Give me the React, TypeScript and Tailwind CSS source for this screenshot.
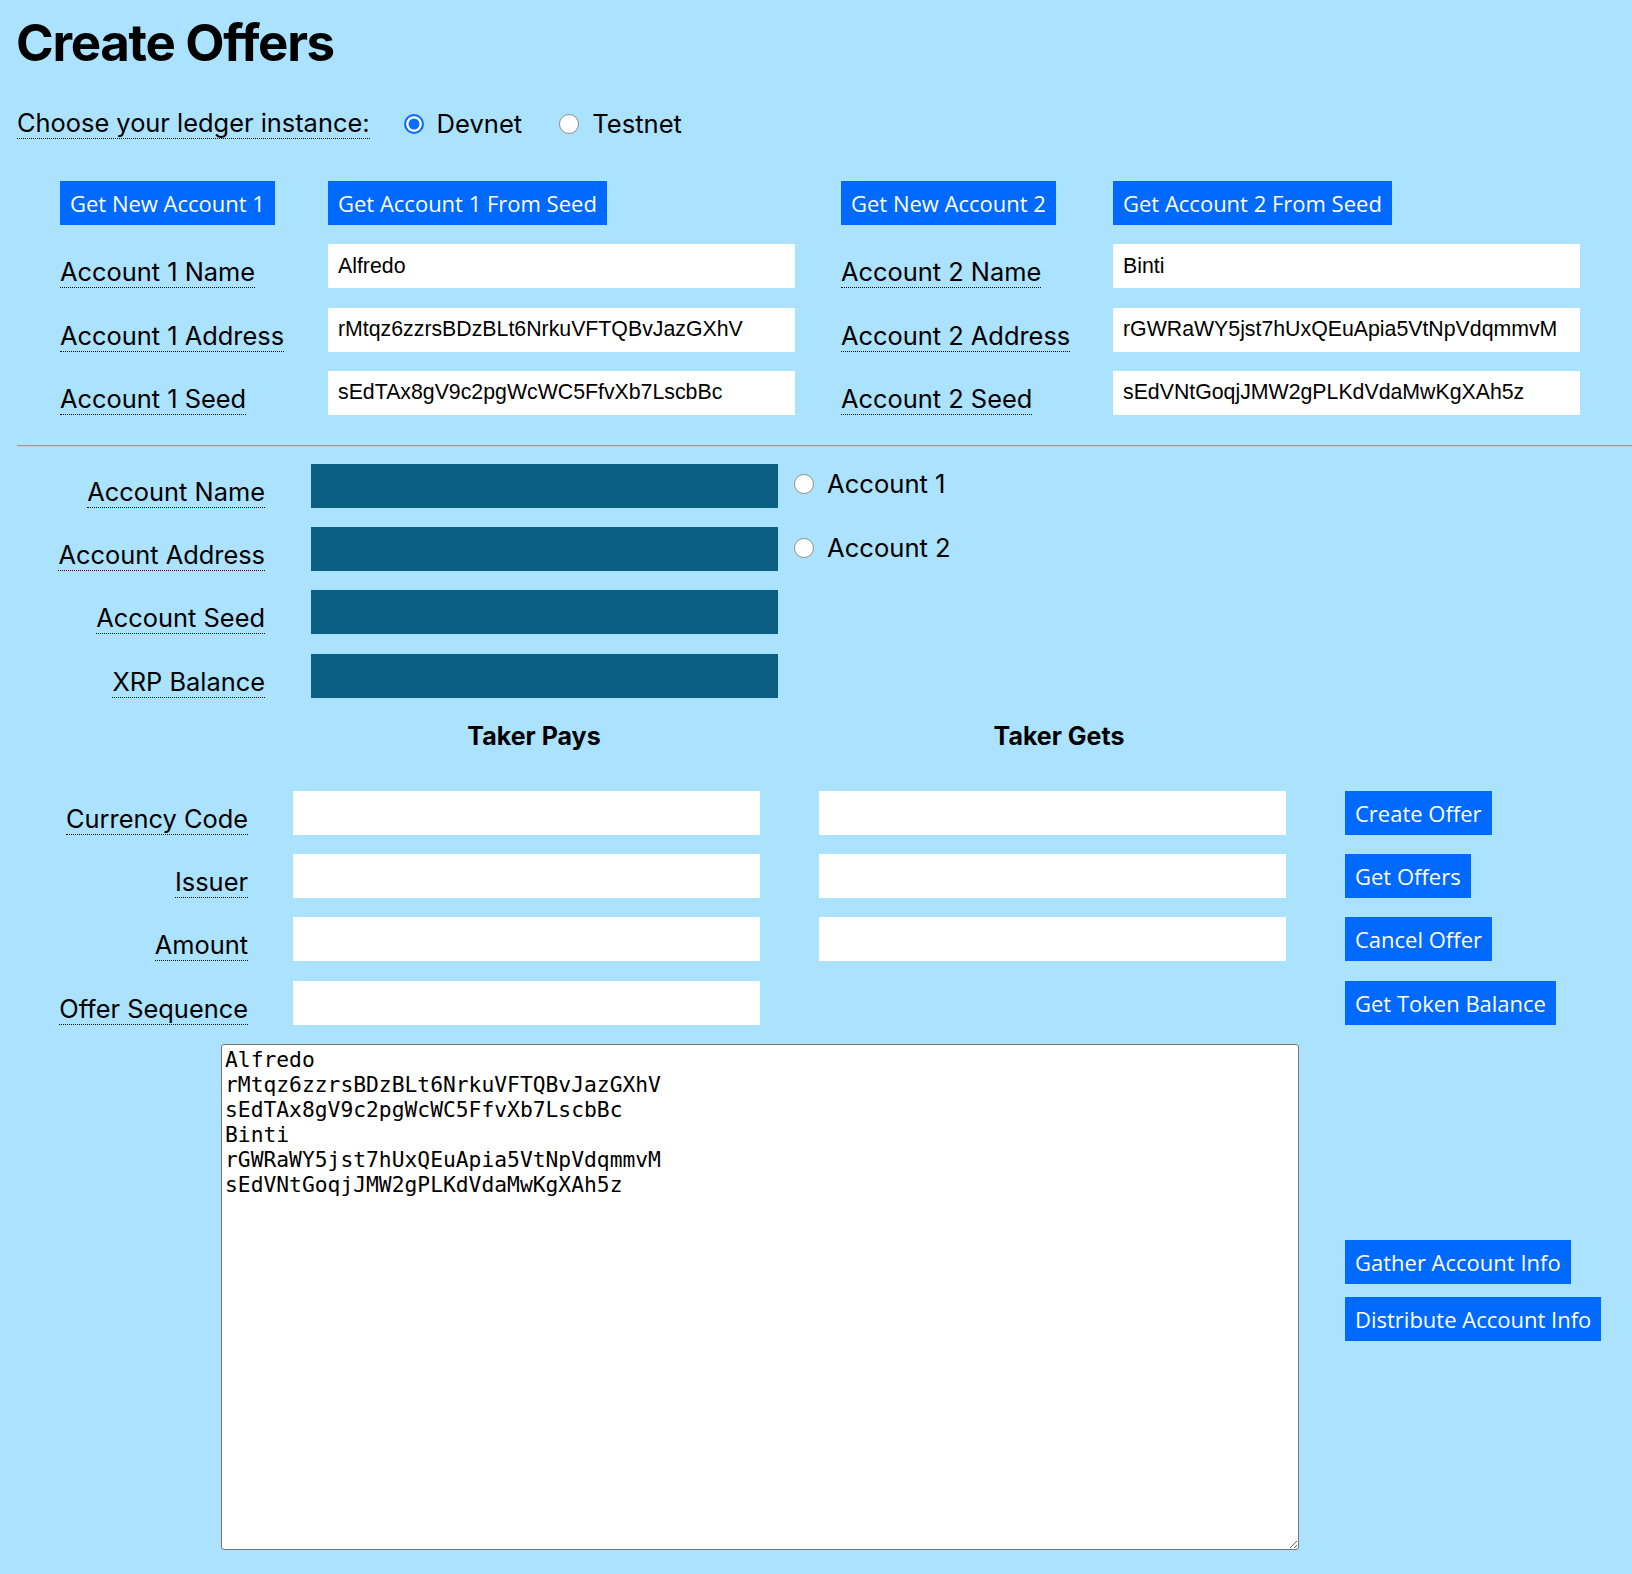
import React from 'react';

const labelCls =
    "font-['Inter',sans-serif] text-[25.4px] leading-[30px] text-black whitespace-nowrap border-b border-dotted border-black";
const btnCls =
    "h-[44px] px-[10px] bg-[#0069ff] text-white font-['Open_Sans',sans-serif] font-medium text-[22px] leading-none whitespace-nowrap";
const inputCls =
    "h-[44px] w-[467px] bg-white px-[10px] font-['Liberation_Sans',Arial,sans-serif] text-[21.3px] text-black outline-none";
const darkInputCls = 'h-[44px] w-[467px] bg-[#0b5f82] px-[10px] outline-none';
const radioCls =
    'appearance-none w-[20px] h-[20px] rounded-full border border-[#8e8e8e] bg-white shrink-0 checked:border-2 checked:border-[#0b6cff] checked:bg-[#0b6cff] checked:shadow-[inset_0_0_0_2.5px_#fff]';

const log = [
    'Alfredo',
    'rMtqz6zzrsBDzBLt6NrkuVFTQBvJazGXhV',
    'sEdTAx8gV9c2pgWcWC5FfvXb7LscbBc',
    'Binti',
    'rGWRaWY5jst7hUxQEuApia5VtNpVdqmmvM',
    'sEdVNtGoqjJMW2gPLKdVdaMwKgXAh5z',
].join('\n');

function Label({ children, className = '' }: { children: React.ReactNode; className?: string }) {
    return <span className={`${labelCls} ${className}`}>{children}</span>;
}

export default function App() {
    return (
        <div className="min-h-screen bg-[#abe2fe] pl-[17px] pb-[23px] font-['Inter',sans-serif] text-black">
            {/* Title */}
            <h1 className="pt-[15px] font-['Inter',sans-serif] text-[51px] leading-[56px] font-bold tracking-[-1.3px] -ml-[1px]">
                Create Offers
            </h1>

            {/* Ledger choice */}
            <div className="mt-[37px] flex items-center h-[31px]">
                <Label>Choose your ledger instance:</Label>
                <label className="ml-[34px] flex items-center gap-[13px] text-[25.6px] leading-[30px]">
                    <input type="radio" name="ledger" defaultChecked className={radioCls} />
                    Devnet
                </label>
                <label className="ml-[37px] flex items-center gap-[13px] text-[25.6px] leading-[30px]">
                    <input type="radio" name="ledger" className={radioCls} />
                    Testnet
                </label>
            </div>

            {/* Account 1 / Account 2 */}
            <div className="mt-[42px] ml-[43px] grid grid-cols-[268px_513px_272px_auto] auto-rows-[44px] gap-y-[19.3px]">
                <button className={`${btnCls} justify-self-start`}>Get New Account 1</button>
                <button className={`${btnCls} justify-self-start`}>Get Account 1 From Seed</button>
                <button className={`${btnCls} justify-self-start`}>Get New Account 2</button>
                <button className={`${btnCls} justify-self-start`}>Get Account 2 From Seed</button>

                <Label className="self-end justify-self-start">Account 1 Name</Label>
                <input className={inputCls} defaultValue="Alfredo" />
                <Label className="self-end justify-self-start">Account 2 Name</Label>
                <input className={inputCls} defaultValue="Binti" />

                <Label className="self-end justify-self-start">Account 1 Address</Label>
                <input className={inputCls} defaultValue="rMtqz6zzrsBDzBLt6NrkuVFTQBvJazGXhV" />
                <Label className="self-end justify-self-start">Account 2 Address</Label>
                <input className={inputCls} defaultValue="rGWRaWY5jst7hUxQEuApia5VtNpVdqmmvM" />

                <Label className="self-end justify-self-start">Account 1 Seed</Label>
                <input className={inputCls} defaultValue="sEdTAx8gV9c2pgWcWC5FfvXb7LscbBc" />
                <Label className="self-end justify-self-start">Account 2 Seed</Label>
                <input className={inputCls} defaultValue="sEdVNtGoqjJMW2gPLKdVdaMwKgXAh5z" />
            </div>

            <hr className="mt-[30px] h-0 border-0 border-t border-b border-t-[#9b9b9b] border-b-[#c9c9c9]" />

            {/* Selected account */}
            <div className="mt-[17px] ml-[43px] grid grid-cols-[251px_483px_auto] auto-rows-[44px] gap-y-[19.3px]">
                <div className="pr-[46px] flex justify-end items-end">
                    <Label>Account Name</Label>
                </div>
                <input className={darkInputCls} />
                <label className="self-start mt-[5px] h-[30px] flex items-center gap-[13px] text-[25.6px] leading-[30px]">
                    <input type="radio" name="account" className={radioCls} />
                    Account 1
                </label>

                <div className="pr-[46px] flex justify-end items-end">
                    <Label>Account Address</Label>
                </div>
                <input className={darkInputCls} />
                <label className="self-start mt-[6px] h-[30px] flex items-center gap-[13px] text-[25.6px] leading-[30px]">
                    <input type="radio" name="account" className={radioCls} />
                    Account 2
                </label>

                <div className="pr-[46px] flex justify-end items-end">
                    <Label>Account Seed</Label>
                </div>
                <input className={darkInputCls} />
                <div />

                <div className="pr-[46px] flex justify-end items-end">
                    <Label>XRP Balance</Label>
                </div>
                <input className={darkInputCls} />
                <div />
            </div>

            {/* Offer fields */}
            <div className="mt-[23px] ml-[43px] grid grid-cols-[233px_526px_526px_auto]">
                <div />
                <div className="w-[482px] text-center text-[25px] leading-[30px] font-bold">Taker Pays</div>
                <div className="w-[480px] text-center text-[25px] leading-[30px] font-bold">Taker Gets</div>
            </div>

            <div className="mt-[40px] ml-[43px] grid grid-cols-[233px_526px_526px_auto] auto-rows-[44px] gap-y-[19.3px]">
                <div className="pr-[45px] flex justify-end items-end">
                    <Label>Currency Code</Label>
                </div>
                <input className={inputCls} />
                <input className={inputCls} />
                <button className={`${btnCls} justify-self-start`}>Create Offer</button>

                <div className="pr-[45px] flex justify-end items-end">
                    <Label>Issuer</Label>
                </div>
                <input className={inputCls} />
                <input className={inputCls} />
                <button className={`${btnCls} justify-self-start`}>Get Offers</button>

                <div className="pr-[45px] flex justify-end items-end">
                    <Label>Amount</Label>
                </div>
                <input className={inputCls} />
                <input className={inputCls} />
                <button className={`${btnCls} justify-self-start`}>Cancel Offer</button>

                <div className="pr-[45px] flex justify-end items-end">
                    <Label>Offer Sequence</Label>
                </div>
                <input className={inputCls} />
                <div />
                <button className={`${btnCls} justify-self-start`}>Get Token Balance</button>
            </div>

            {/* Results */}
            <div className="mt-[19px] ml-[204px] flex items-start">
                <textarea
                    className="w-[1078px] h-[506px] bg-white border border-[#767676] rounded-[3px] px-[3px] pt-[2px] font-['DejaVu_Sans_Mono',monospace] text-[21.3px] leading-[25px] text-black outline-none"
                    defaultValue={log}
                />
                <div className="ml-[46px] pt-[196px] flex flex-col items-start gap-[13px]">
                    <button className={btnCls}>Gather Account Info</button>
                    <button className={btnCls}>Distribute Account Info</button>
                </div>
            </div>
        </div>
    );
}
